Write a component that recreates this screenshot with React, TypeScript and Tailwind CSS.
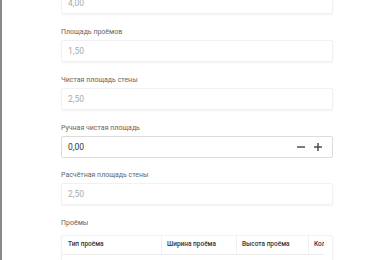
import React from "react";

const font = { fontFamily: "Roboto, 'Noto Sans', sans-serif" };

function Label({ children }: { children: React.ReactNode }) {
  return <div className="h-[10px] leading-[10px] text-[7px] text-[#666] mb-[3px]">{children}</div>;
}

function Disabled({ value }: { value: string }) {
  return (
    <div className="h-[22px] w-[272px] rounded-[2px] border border-[#f1f1f1] shadow-[0_1px_2px_rgba(0,0,0,0.05)] flex items-center px-[6px] text-[8.5px] text-[#aaa] bg-white">
      {value}
    </div>
  );
}

export default function App() {
  return (
    <div className="w-[390px] h-[260px] overflow-hidden bg-white border-l-2 border-[#8a8a8a]" style={font}>
      <div className="pl-[59px] -mt-[8px] flex flex-col">
        <Disabled value="4,00" />
        <div className="mt-[13px]"><Label>Площадь проёмов</Label></div>
        <Disabled value="1,50" />
        <div className="mt-[13px]"><Label>Чистая площадь стены</Label></div>
        <Disabled value="2,50" />
        <div className="mt-[13px]"><Label>Ручная чистая площадь</Label></div>
        <div className="h-[22px] w-[272px] rounded-[2px] border border-[#dcdcdc] flex items-center pl-[6px] pr-[10px] text-[8.5px] text-[#333] bg-white">
          <span className="flex-1">0,00</span>
          <svg width="8" height="8" viewBox="0 0 8 8" className="mr-[9px]"><rect x="0" y="3.3" width="8" height="1.4" fill="#444" /></svg>
          <svg width="8" height="8" viewBox="0 0 8 8"><rect x="0" y="3.3" width="8" height="1.4" fill="#444" /><rect x="3.3" y="0" width="1.4" height="8" fill="#444" /></svg>
        </div>
        <div className="mt-[12px]"><Label>Расчётная площадь стены</Label></div>
        <Disabled value="2,50" />
        <div className="mt-[13px] mb-[4px]"><Label>Проёмы</Label></div>
        <div className="w-[272px] border border-[#f1f1f1] shadow-[0_1px_2px_rgba(0,0,0,0.05)] rounded-[2px] overflow-hidden">
          <div className="w-[262px] overflow-hidden">
            <div className="flex h-[19px] items-center border-b border-[#ececec] text-[6.5px] font-medium text-[#333] whitespace-nowrap">
              <div className="w-[100px] shrink-0 pl-[6px] border-r border-[#f0f0f0] h-full flex items-center">Тип проёма</div>
              <div className="w-[75px] shrink-0 pl-[5px] border-r border-[#f0f0f0] h-full flex items-center">Ширина проёма</div>
              <div className="w-[72px] shrink-0 pl-[5px] border-r border-[#f0f0f0] h-full flex items-center">Высота проёма</div>
              <div className="w-[60px] shrink-0 pl-[5px] h-full flex items-center">Количество</div>
            </div>
            <div className="flex h-[19px] items-center text-[6.5px] text-[#555] whitespace-nowrap">
              <div className="w-[100px] shrink-0 pl-[6px]">Окно</div>
              <div className="w-[75px] shrink-0 pl-[5px]">1,00</div>
              <div className="w-[72px] shrink-0 pl-[5px]">1,50</div>
              <div className="w-[60px] shrink-0 pl-[5px]">1</div>
            </div>
          </div>
        </div>
      </div>
    </div>
  );
}
